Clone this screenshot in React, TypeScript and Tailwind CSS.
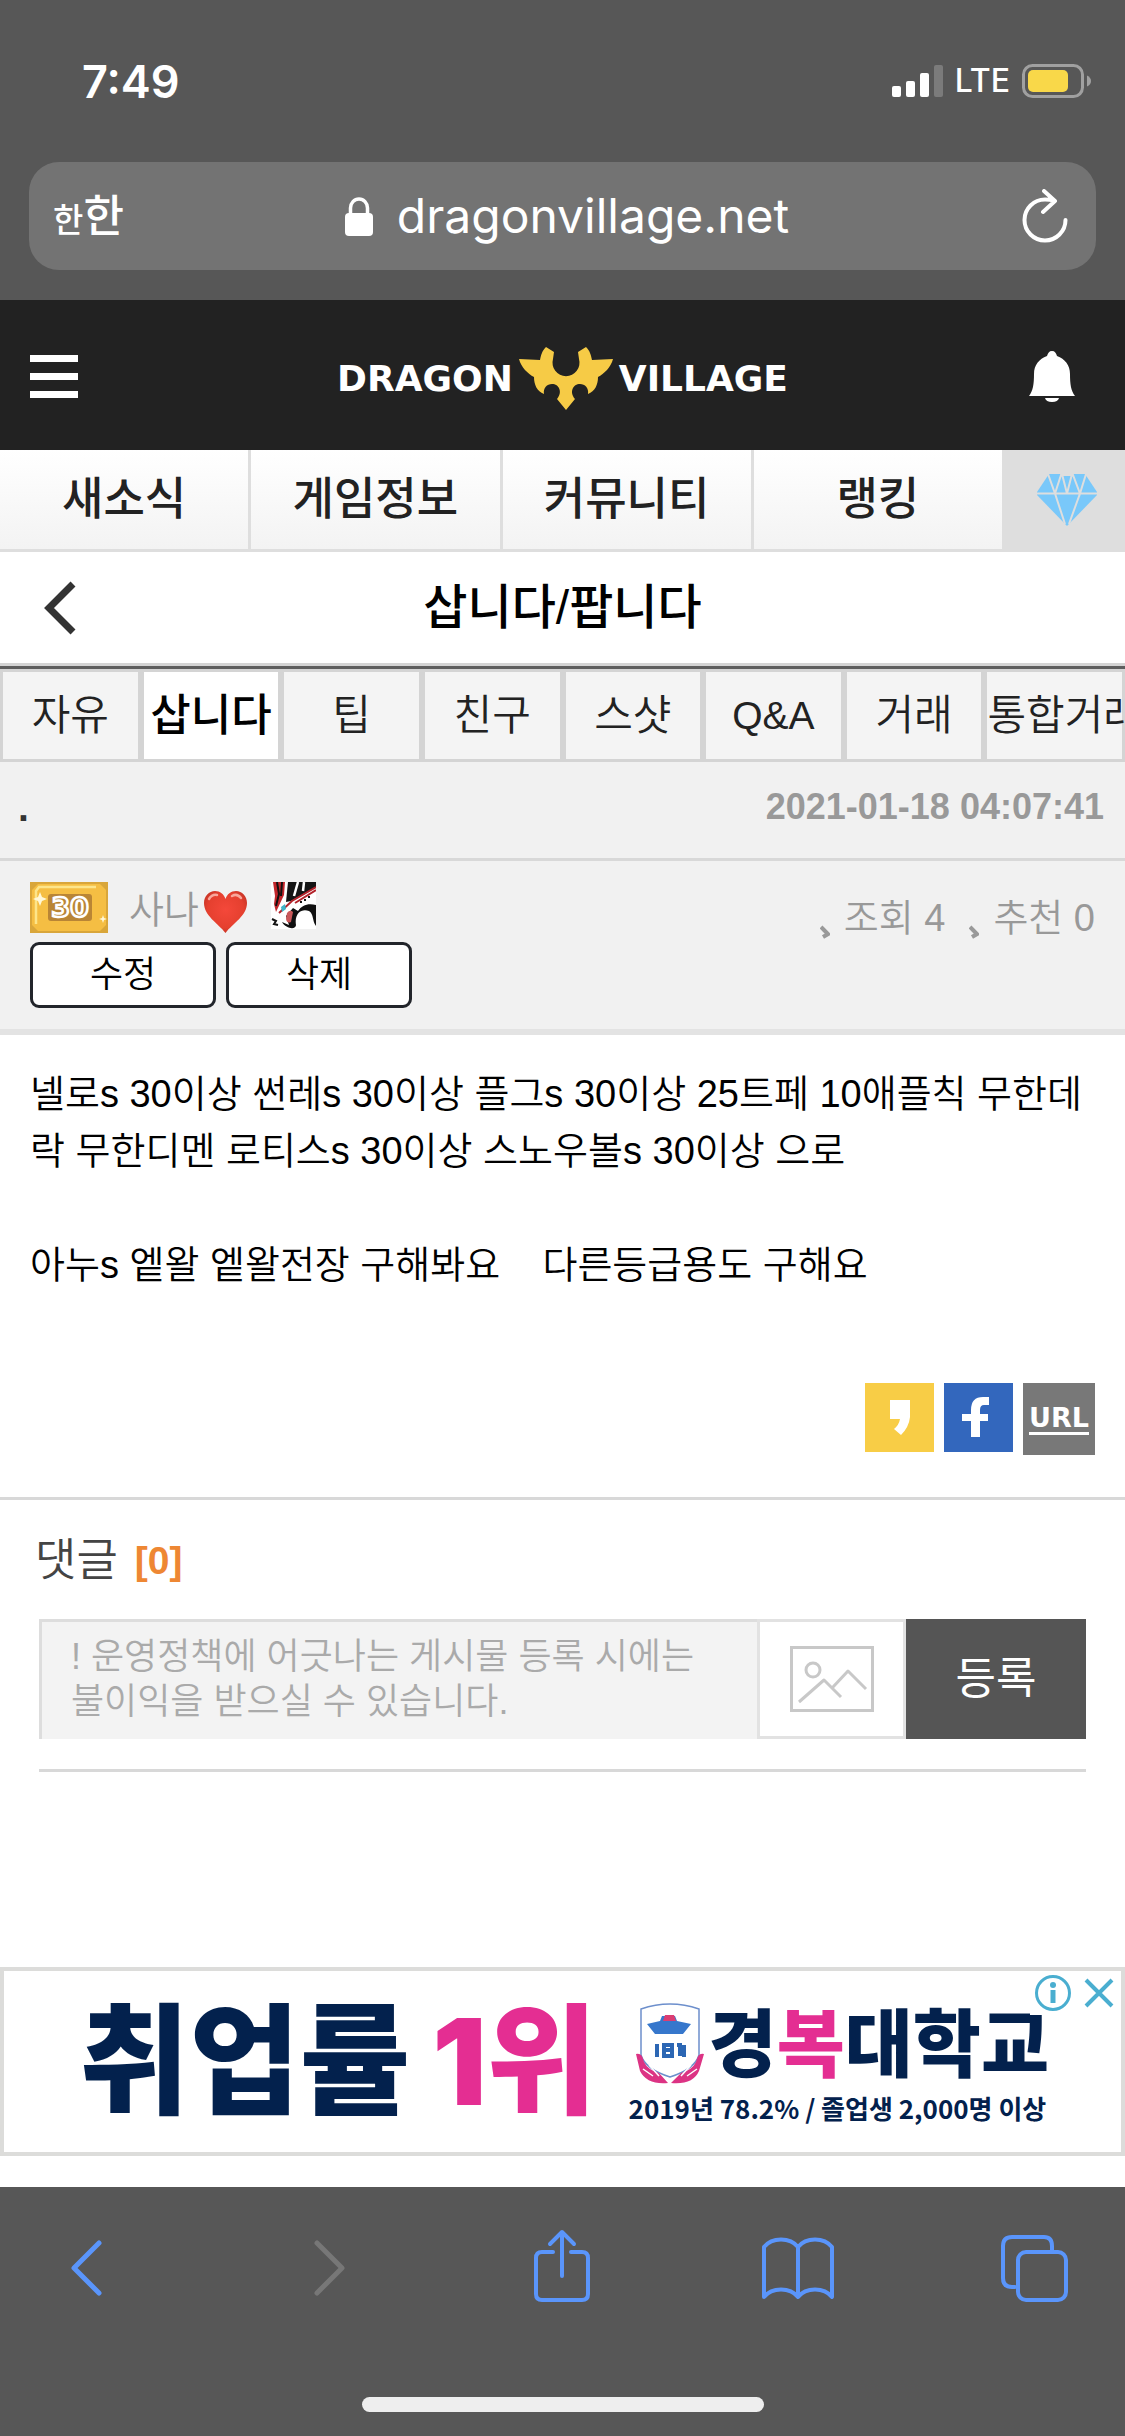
import type { ReactNode } from 'react';
import clsx from 'clsx';

const KR = "font-['Liberation_Sans','Noto_Sans_CJK_KR',sans-serif]";
const SF = "font-['Inter','Noto_Sans_CJK_KR',sans-serif]";

const MENU = ['새소식', '게임정보', '커뮤니티', '랭킹'];
const BOARDS = ['자유', '삽니다', '팁', '친구', '스샷', 'Q&A', '거래', '통합거래'];

/* ---------- browser chrome ---------- */

function StatusBar() {
  return (
    <div className={clsx('flex h-[162px] items-center justify-between pr-[34px] pl-[82px] text-white', SF)}>
      <span className="text-[45px] leading-none font-semibold">7:49</span>
      <div className="flex items-center gap-[12px]">
        <svg className="h-[32px] w-[51px]" viewBox="0 0 51 32" fill="currentColor" aria-hidden="true">
          <rect y="21" width="9" height="11" rx="2" />
          <rect x="14" y="16" width="9" height="16" rx="2" />
          <rect x="28" y="8" width="9" height="24" rx="2" />
          <rect x="42" width="9" height="32" rx="2" fill="#7b7b7b" />
        </svg>
        <span className="text-[32px] leading-none font-medium">LTE</span>
        <svg className="h-[34px] w-[69px]" viewBox="0 0 69 34" aria-hidden="true">
          <rect x="1.5" y="1.5" width="59" height="31" rx="9" fill="none" stroke="#a0a0a0" strokeWidth="3" />
          <path d="M65 11.5q4 2 4 5.500t-4 5.500z" fill="#a0a0a0" />
          <rect x="6" y="6" width="40" height="22" rx="5" fill="#f9d849" />
        </svg>
      </div>
    </div>
  );
}

function AddressBar() {
  return (
    <div
      className={clsx(
        'mx-[29px] flex h-[108px] items-center justify-between rounded-[30px] bg-[#737373] pr-[28px] pl-[24px] text-white',
        SF,
      )}
    >
      <button type="button" aria-label="보기 설정" className="flex w-[88px] items-baseline leading-none font-medium">
        <span className="text-[33px]">한</span>
        <span className="text-[44px]">한</span>
      </button>
      <div className="flex items-center gap-[24px]">
        <svg className="h-[39px] w-[28px]" viewBox="0 0 28 39" aria-hidden="true">
          <rect y="16" width="28" height="23" rx="4" fill="currentColor" />
          <path d="M5.500 18v-7a8.500 9 0 0 1 17 0v7" fill="none" stroke="currentColor" strokeWidth="3.500" />
        </svg>
        <span className="text-[48px] leading-none">dragonvillage.net</span>
      </div>
      <button type="button" aria-label="새로 고침" className="flex w-[75px] justify-end">
        <svg
          className="h-[54px] w-[46px]"
          viewBox="0 0 46 54"
          fill="none"
          stroke="currentColor"
          strokeWidth="4"
          strokeLinecap="round"
          strokeLinejoin="round"
          aria-hidden="true"
        >
          <path d="M43.500 31A20.500 20.500 0 1 1 23 10.500q5 0 9 1M22 2l11 10-12 11" />
        </svg>
      </button>
    </div>
  );
}

function ToolButton({ label, disabled, children }: { label: string; disabled?: boolean; children: ReactNode }) {
  return (
    <button type="button" aria-label={label} disabled={disabled} className="text-[#5a95fb] disabled:text-[#777]">
      <svg
        className="h-[76px] w-[76px]"
        viewBox="0 0 76 76"
        fill="none"
        stroke="currentColor"
        strokeWidth="4"
        strokeLinecap="round"
        strokeLinejoin="round"
        aria-hidden="true"
      >
        {children}
      </svg>
    </button>
  );
}

function BottomBar() {
  return (
    <footer className="flex h-[249px] flex-col items-center justify-between bg-[#575757] pt-[41px] pb-[24px]">
      <div className="flex w-full justify-between pr-[55px] pl-[49px]">
        <ToolButton label="뒤로">
          <path d="M50 15 25 40l25 25" strokeWidth="5" />
        </ToolButton>
        <ToolButton label="앞으로" disabled>
          <path d="M32 15l25 25-25 25" strokeWidth="5" />
        </ToolButton>
        <ToolButton label="공유">
          <path d="M31 24H20q-6 0-6 6v36q0 6 6 6h40q6 0 6-6V30q0-6-6-6H49" />
          <path d="M40 48V4M28 16 40 4l12 12" />
        </ToolButton>
        <ToolButton label="책갈피">
          <path d="M40 19C32 9 14 9 6 19v50c8-10 26-10 34 0 8-10 26-10 34 0V19C66 9 48 9 40 19zV69" />
        </ToolButton>
        <ToolButton label="탭">
          <path d="M21 59h-3q-9 0-9-9V18q0-9 9-9h32q8 0 8 9v5" />
          <rect x="24" y="24" width="48" height="48" rx="8" />
        </ToolButton>
      </div>
      <div className="h-[15px] w-[402px] rounded-full bg-[#eee]" />
    </footer>
  );
}

/* ---------- site ---------- */

function Emblem() {
  return (
    <svg className="h-[63px] w-[94px]" viewBox="0 0 94 63" fill="#f6cb46" aria-hidden="true">
      <path d="M27 0l8 5-1 7a13.500 13.500 0 1 0 26 0l-1-7 8-5c4 4 5 8 6 13l21-1c-2 8-9 15-15 18 0 8-3 14-10 17 1-6-3-10-8-10-7 0-11 8-5 15l-9 11-9-11c6-7 2-15-5-15-5 0-9 4-8 10-7-3-10-9-10-17C9 27 2 20 0 12l21 1c1-5 2-9 6-13z" />
    </svg>
  );
}

function SiteHeader() {
  return (
    <header className="flex h-[150px] items-center justify-between bg-[#222] px-[30px] pt-[3px] text-white">
      <button type="button" aria-label="메뉴" className="flex w-[66px] flex-col gap-[11px]">
        <span className="h-[7px] w-[48px] bg-white" />
        <span className="h-[7px] w-[48px] bg-white" />
        <span className="h-[7px] w-[48px] bg-white" />
      </button>
      <a
        href="#home"
        className="flex items-center gap-[6px] pt-[4px] font-['DejaVu_Sans',sans-serif] text-[36px] leading-none font-bold"
      >
        <span>DRAGON</span>
        <Emblem />
        <span>VILLAGE</span>
      </a>
      <button type="button" aria-label="알림" className="flex w-[66px] justify-start">
        <svg className="h-[51px] w-[46px]" viewBox="0 0 46 51" fill="currentColor" aria-hidden="true">
          <path d="M23 0c3 0 4 2 5 5 8 3 13 9 13 18 0 10 1 17 5 22H0c4-5 5-12 5-22C5 14 10 8 18 5c1-3 2-5 5-5zM16 47h14q-1 4-7 4t-7-4z" />
        </svg>
      </button>
    </header>
  );
}

function MainMenu() {
  return (
    <nav className="flex h-[102px] border-b-[3px] border-[#dedede]">
      {MENU.map((label, i) => (
        <a
          key={label}
          href="#menu"
          className={clsx(
            'flex flex-1 items-center justify-center border-[#dedede] bg-linear-to-b from-white to-[#f3f3f3] text-[45px] leading-none font-medium text-[#222]',
            i < MENU.length - 1 && 'border-r-[3px]',
          )}
        >
          {label}
        </a>
      ))}
      <a href="#shop" aria-label="상점" className="flex w-[123px] items-center justify-center bg-[#dedede] pl-[6px]">
        <svg className="h-[52px] w-[60px]" viewBox="0 0 60 52" aria-hidden="true">
          <path d="M12 0h36l12 18v3L30 52 0 21v-3z" fill="#79c8fa" />
          <path
            d="M0 19.500h60M11 0l7 19.500L24 1h12l7 18.500L49 0M18 19.500 28 50M43 19.500 32 50M25 0l5 19.500M35 0l-5 19.500"
            fill="none"
            stroke="#dedede"
            strokeWidth="2"
          />
        </svg>
      </a>
    </nav>
  );
}

function BoardTabs() {
  return (
    <nav className="flex overflow-hidden border-t-[3px] border-b-[3px] border-[#d4d4d4]">
      {BOARDS.map((label) => {
        const active = label === '삽니다';
        return (
          <a
            key={label}
            href="#board"
            aria-current={active ? 'page' : undefined}
            className={clsx(
              'flex h-[87px] w-1/8 shrink-0 items-center border-x-[3px] border-[#d4d4d4] leading-none whitespace-nowrap',
              label === '통합거래' ? 'justify-start' : 'justify-center',
              active ? 'bg-white text-[44px] font-medium text-black' : 'bg-[#f4f4f4] font-[350] text-[#222]',
              !active && (label === 'Q&A' ? 'text-[39px]' : 'text-[42px]'),
            )}
          >
            {label}
          </a>
        );
      })}
    </nav>
  );
}

function LevelBadge() {
  return (
    <svg className="h-[51px] w-[78px]" viewBox="0 0 78 51" role="img" aria-label="레벨 30">
      <rect width="78" height="51" fill="#d9a63a" />
      <path d="M8 2h62l6 6v35l-6 6H8l-6-6V8z" fill="#f5be43" />
      <path d="M6 42V9l3-4h57" fill="none" stroke="#fde58a" strokeWidth="2.500" />
      <rect x="18" y="12" width="44" height="27" rx="3" fill="#b98535" />
      <text
        x="40"
        y="35"
        textAnchor="middle"
        fill="#b98535"
        stroke="#fff"
        strokeWidth="2.500"
        className="font-['DejaVu_Sans',sans-serif] text-[27px] font-bold"
      >
        30
      </text>
      <path d="M10 10l2 5 5 2-5 2-2 5-2-5-5-2 5-2zM73 33l1 3 3 1-3 1-1 3-1-3-3-1 3-1z" fill="#fff8d8" />
    </svg>
  );
}

function Heart() {
  return (
    <svg className="h-[42px] w-[43px]" viewBox="0 0 43 42" aria-hidden="true">
      <defs>
        <radialGradient id="heart" cx="50%" cy="45%" r="60%">
          <stop offset="0" stopColor="#f4483a" />
          <stop offset="0.700" stopColor="#e5402f" />
          <stop offset="1" stopColor="#c23325" />
        </radialGradient>
      </defs>
      <path d="M21.500 42C14 32 0 25 0 12 0 5 5 0 11 0c5 0 9 3 10.500 8C23 3 27 0 32 0c6 0 11 5 11 12 0 13-14 20-21.500 30z" fill="url(#heart)" />
      <path d="M5 8q3-5 8-4M28 5q5-3 9 2" stroke="#f8a79c" strokeWidth="2.500" strokeLinecap="round" fill="none" />
    </svg>
  );
}

function DragonAvatar() {
  return (
    <svg className="h-[47px] w-[45px]" viewBox="0 0 45 47" aria-hidden="true">
      <rect width="45" height="47" fill="#fff" />
      <path d="M2 0h12l-1 13-8 17-2-8 1-8z" fill="#c2262b" />
      <path d="M6 0l2 12-3 12M11 0l-1 14" stroke="#111" strokeWidth="2" fill="none" />
      <path d="M17 0h28v5L20 19l-5 1z" fill="#151515" />
      <path d="M27 0l-4 14M33 0l-1 9" stroke="#fff" strokeWidth="2.500" />
      <path d="M45 5 21 19 8 31M45 8 24 21" stroke="#b3222a" strokeWidth="2" fill="none" />
      <path d="M45 23c-8-2-14 0-18 6l-5-3-7 8 3 9-7-3c4 7 14 8 14 3-2-12 6-17 13-14 5 3 3 10 7 15z" fill="#101010" />
      <path d="M16 31q3-4 6-1l-2 10q-4 2-5-3z" fill="#c9585a" />
      <path d="M10 25l4-3 1 5-4 3z" fill="#3fb4c8" />
      <path d="M29 20h2M33 18h2M37 15h2M1 37l4 2-2 3 4 1" stroke="#151515" strokeWidth="2" fill="none" />
    </svg>
  );
}

function Stat({ label, value }: { label: string; value: number }) {
  return (
    <span className="flex items-center gap-[14px]">
      <svg className="mt-[28px] h-[14px] w-[10px]" viewBox="0 0 10 14" aria-hidden="true">
        <path d="M1 2l3 3 4 4-5 3" fill="none" stroke="#999" strokeWidth="4" />
      </svg>
      <span>
        {label} {value}
      </span>
    </span>
  );
}

function PostHeader() {
  return (
    <section className="border-b-[6px] border-[#e3e3e3] bg-[#f1f1f1]">
      <div className="flex h-[99px] items-center justify-between border-b-[3px] border-[#d8d8d8] pr-[21px] pb-[6px] pl-[18px] leading-none font-bold">
        <h2 className="text-[39px] text-[#333]">.</h2>
        <time className="text-[36px] text-[#999]">2021-01-18 04:07:41</time>
      </div>
      <div className="flex items-start justify-between px-[30px] pt-[21px] pb-[21px]">
        <div>
          <div className="flex h-[60px] items-start text-[38px] leading-[56px] font-[350] text-[#999]">
            <LevelBadge />
            <span className="ml-[21px]">사나</span>
            <span className="mt-[9px] ml-[5px]">
              <Heart />
            </span>
            <span className="ml-[24px]">
              <DragonAvatar />
            </span>
          </div>
          <div className="flex gap-[10px]">
            {['수정', '삭제'].map((label) => (
              <button
                key={label}
                type="button"
                className="h-[66px] w-[186px] rounded-[9px] border-[3px] border-[#22252b] bg-white text-[36px] leading-none font-[350] text-black"
              >
                {label}
              </button>
            ))}
          </div>
        </div>
        <div className="mt-[8px] flex gap-[24px] text-[38px] leading-[56px] font-[350] text-[#999]">
          <Stat label="조회" value={4} />
          <Stat label="추천" value={0} />
        </div>
      </div>
    </section>
  );
}

function PostBody() {
  return (
    <article className="px-[30px] pt-[31px] text-[38px] leading-[57px] font-[350] break-all text-black">
      <p>
        넬로s 30이상 썬레s 30이상 플그s 30이상 25트페 10애플칙 무한데락 무한디멘 로티스s 30이상 스노우볼s 30이상 으로
      </p>
      <p className="mt-[57px] whitespace-pre-wrap">아누s 엩왈 엩왈전장 구해봐요{'\u00a0\u00a0\u00a0 '}다른등급용도 구해요</p>
    </article>
  );
}

function ShareLinks() {
  return (
    <div className="mt-[89px] flex h-[114px] items-start justify-end gap-[10px] pr-[30px]">
      <a href="#kakao" aria-label="카카오스토리" className="bg-[#f8cd46]">
        <svg className="h-[69px] w-[69px]" viewBox="0 0 69 69" aria-hidden="true">
          <path d="M25 17h20v17q-1 10-9 18l-7-6q5-4 6-10H25z" fill="#fff" />
        </svg>
      </a>
      <a href="#facebook" aria-label="페이스북" className="bg-[#3367bd]">
        <svg className="h-[69px] w-[69px]" viewBox="0 0 69 69" aria-hidden="true">
          <path d="M27 54V38h-9v-7h9v-4q0-13 12-13h6v8h-5q-4 0-4 5v4h8v7h-8v16z" fill="#fff" />
        </svg>
      </a>
      <a href="#url" className="flex h-[72px] w-[72px] items-center justify-center bg-[#787878]">
        <span className="border-b-[3px] border-white pb-[1px] font-['DejaVu_Sans',sans-serif] text-[27px] leading-none font-bold text-white">
          URL
        </span>
      </a>
    </div>
  );
}

function Comments() {
  return (
    <section className="border-t-[3px] border-[#d8d8d8] pt-[31px]">
      <h3 className="flex items-center gap-[17px] px-[35px] text-[45px] leading-[60px] font-[350] text-[#444]">
        댓글 <span className="text-[39px] font-bold text-[#ee8733]">[0]</span>
      </h3>
      <form className="mx-[39px] mt-[28px] border-b-[3px] border-[#d8d8d8] pb-[30px]">
        <div className="flex h-[120px]">
          <textarea
            aria-label="댓글 내용"
            placeholder="! 운영정책에 어긋나는 게시물 등록 시에는 불이익을 받으실 수 있습니다."
            className="min-w-0 flex-1 resize-none overflow-hidden rounded-none border-t-[3px] border-l-[3px] border-[#ddd] bg-[#f3f3f3] pt-[12px] pr-[40px] pl-[29px] text-[36px] leading-[45px] font-[350] text-[#555] placeholder:text-[#aaa]"
          />
          <button
            type="button"
            aria-label="이미지 첨부"
            className="flex w-[149px] items-center justify-center border-[3px] border-[#e2e2e2] bg-white"
          >
            <svg
              className="h-[66px] w-[84px]"
              viewBox="0 0 84 66"
              fill="none"
              stroke="#c8c8c8"
              strokeWidth="3"
              aria-hidden="true"
            >
              <rect x="1.5" y="1.5" width="81" height="63" />
              <circle cx="23" cy="24" r="7" />
              <path d="M9 56 34 34 51 51M43 41 58 25 76 43" strokeLinejoin="round" />
            </svg>
          </button>
          <button type="submit" className="w-[180px] bg-[#555] text-[44px] leading-none text-white">
            등록
          </button>
        </div>
      </form>
    </section>
  );
}

function Crest() {
  return (
    <svg className="h-[82px] w-[70px] shrink-0" viewBox="0 0 70 82" aria-hidden="true">
      <path d="M6 6q29-10 58 0v46q-4 14-29 22Q10 66 6 52z" fill="#fff" stroke="#6d8fcc" strokeWidth="1.500" />
      <path d="M12 21l13-3 2-5h13l2 5 14 3-8 10H20z" fill="#3677cc" />
      <path d="M28 18l2-6h9l2 6z" fill="#dc3d72" />
      <path d="M22 41v13M29 42h8v11h-8zM29 47h8M42 42h3v11M49 42v12" stroke="#2c67b4" strokeWidth="4" fill="none" />
      <path d="M1 51q6-2 8 8 4 8 15 11l9 10Q12 82 5 68zM69 51q-6-2-8 8-4 8-15 11l-10 10q22 2 28-12z" fill="#dc3384" />
      <path d="M8 66l10 7M14 62l10 11M62 66l-10 7M56 62l-10 11" stroke="#fff" strokeWidth="1.500" />
    </svg>
  );
}

function AdBanner() {
  return (
    <aside
      className={clsx(
        'relative mt-[195px] mb-[30px] flex h-[189px] items-center justify-between border-[4px] border-[#dcdcda] bg-white pr-[72px] pl-[75px] leading-none font-black whitespace-nowrap text-[#03214d]',
        SF,
      )}
    >
      <div className="flex items-center gap-[22px] text-[120px]">
        <span>취업률</span>
        <span className="text-[#e42e92]">1위</span>
      </div>
      <div className="flex flex-col gap-[10px]">
        <div className="flex items-center gap-[4px] pl-[6px] text-[74px]">
          <Crest />
          <span>
            경<span className="text-[#e42e92]">복</span>대학교
          </span>
        </div>
        <span className="font-['Noto_Sans_CJK_KR',sans-serif] text-[26px] font-bold">
          2019년 78.2% / 졸업생 2,000명 이상
        </span>
      </div>
      <div className="absolute top-0 right-0 flex h-[44px] items-center gap-[12px] bg-white pr-[7px] pl-[4px] text-[#4aaed0]">
        <button type="button" aria-label="광고 정보">
          <svg className="h-[38px] w-[38px]" viewBox="0 0 38 38" aria-hidden="true">
            <circle cx="19" cy="19" r="16.500" fill="none" stroke="currentColor" strokeWidth="3" />
            <circle cx="19" cy="11" r="3" fill="currentColor" />
            <path d="M16.500 16h5v13h-5z" fill="currentColor" />
          </svg>
        </button>
        <button type="button" aria-label="광고 닫기">
          <svg className="h-[30px] w-[30px]" viewBox="0 0 30 30" aria-hidden="true">
            <path d="M2 2l26 26M28 2 2 28" stroke="currentColor" strokeWidth="4" />
          </svg>
        </button>
      </div>
    </aside>
  );
}

export default function App() {
  return (
    <div className={clsx('flex min-h-screen flex-col bg-white', KR)}>
      <div className="bg-[#575757] pb-[30px]">
        <StatusBar />
        <AddressBar />
      </div>
      <SiteHeader />
      <MainMenu />
      <main className="flex-1">
        <div className="flex h-[114px] items-center border-b-[3px] border-[#d4d4d4] px-[42px]">
          <button type="button" aria-label="이전" className="w-[80px]">
            <svg className="h-[54px] w-[36px]" viewBox="0 0 36 54" fill="none" aria-hidden="true">
              <path d="M31 3 7 27l24 24" stroke="#333" strokeWidth="7" />
            </svg>
          </button>
          <h1 className="flex-1 pr-[80px] text-center text-[48px] leading-none font-medium">삽니다/팝니다</h1>
        </div>
        <div className="border-t-[3px] border-[#5e5e5e]">
          <BoardTabs />
        </div>
        <PostHeader />
        <PostBody />
        <ShareLinks />
        <Comments />
        <AdBanner />
      </main>
      <BottomBar />
    </div>
  );
}
